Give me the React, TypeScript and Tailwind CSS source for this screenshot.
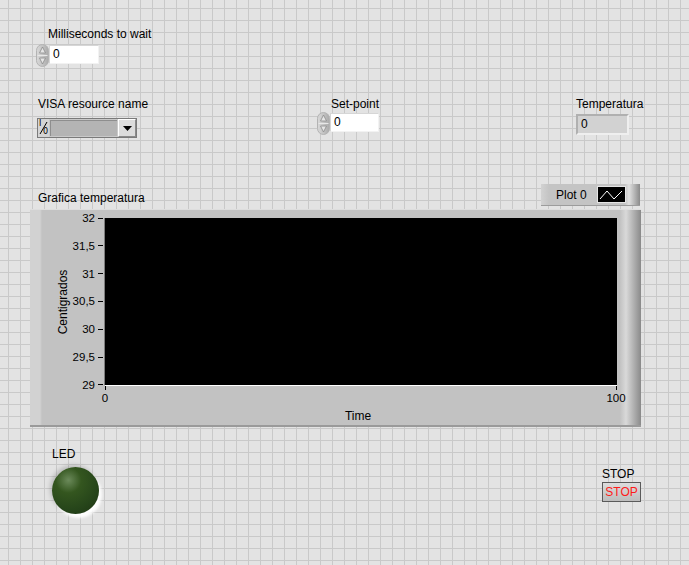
import React from 'react';

const yTicks = ['32', '31,5', '31', '30,5', '30', '29,5', '29'];

function Spinner() {
  return (
    <svg width="13" height="23" viewBox="0 0 13 23" className="block shrink-0">
      <defs>
        <linearGradient id="spin" x1="0" y1="0" x2="1" y2="0">
          <stop offset="0" stopColor="#d9d9d9" />
          <stop offset="0.5" stopColor="#c4c4c4" />
          <stop offset="1" stopColor="#a9a9a9" />
        </linearGradient>
      </defs>
      <rect x="0.5" y="0.5" width="12" height="22" rx="6" fill="url(#spin)" stroke="#b3b3b3" />
      <line x1="1.5" y1="11.5" x2="11.5" y2="11.5" stroke="#e8e8e8" />
      <path d="M6.5 3 L9.5 9 L3.5 9 Z" fill="#e5e5e5" stroke="#8a8a8a" strokeWidth="0.8" />
      <path d="M6.5 20 L9.5 14 L3.5 14 Z" fill="#e5e5e5" stroke="#8a8a8a" strokeWidth="0.8" />
    </svg>
  );
}

function NumericControl({ width }: { width: string }) {
  return (
    <div className="flex items-start">
      <Spinner />
      <div
        className={`mt-[1px] h-[19px] ${width} border-t border-l border-b border-r border-t-[#d6d6d6] border-l-[#d6d6d6] border-b-[#f2f2f2] border-r-[#f2f2f2] bg-white pl-[3px] leading-[17px]`}
      >
        0
      </div>
    </div>
  );
}

export default function App() {
  return (
    <div className="h-[565px] w-[689px] overflow-hidden bg-[#e3e3e3] bg-[linear-gradient(to_right,#c9c9c9_1px,transparent_1px),linear-gradient(to_bottom,#c9c9c9_1px,transparent_1px)] bg-size-[12px_12px] bg-position-[8px_8px] font-['Liberation_Sans',Arial,sans-serif] text-[12px] leading-[14px] text-black">
      {/* Milliseconds to wait */}
      <div className="ml-[36px] pt-[27px]">
        <div className="ml-[12px]">Milliseconds to wait</div>
        <div className="mt-[3px]">
          <NumericControl width="w-[50px]" />
        </div>
      </div>

      {/* VISA / Set-point / Temperatura */}
      <div className="mt-[30px] flex items-start">
        <div className="ml-[37px] w-[280px]">
          <div className="ml-[1px]">VISA resource name</div>
          <div className="mt-[7px] flex h-[20px] w-[100px] border border-[#7a7a7a] bg-[#c9c9c9]">
            <div className="relative w-[11px] shrink-0 bg-[#d4d4d4] font-['DejaVu_Sans',sans-serif] text-[8px] leading-[8px]">
              <svg width="11" height="18" viewBox="0 0 11 18" className="absolute left-0 top-0">
                <line x1="9" y1="3" x2="2" y2="15" stroke="#000" strokeWidth="1" />
              </svg>
              <span className="absolute left-[1px] top-[1px] z-10">I</span>
              <span className="absolute left-[5px] top-[9px] z-10">0</span>
            </div>
            <div className="m-[1px] flex-1 border-t border-l border-t-[#8e8e8e] border-l-[#8e8e8e] bg-[#b4b4b4]" />
            <div className="flex w-[18px] shrink-0 items-center justify-center border-t border-l border-b border-r border-t-white border-l-white border-b-[#8a8a8a] border-r-[#8a8a8a] bg-[#dcdcdc]">
              <svg width="9" height="5" viewBox="0 0 9 5">
                <path d="M0 0 H9 L4.5 5 Z" fill="#000" />
              </svg>
            </div>
          </div>
        </div>

        <div className="w-[259px]">
          <div className="ml-[14px]">Set-point</div>
          <div className="mt-[1px]">
            <NumericControl width="w-[49px]" />
          </div>
        </div>

        <div>
          <div>Temperatura</div>
          <div className="mt-[3px] h-[21px] w-[53px] border-t-2 border-l-2 border-b-2 border-r-2 border-t-[#b0b0b0] border-l-[#b0b0b0] border-b-[#efefef] border-r-[#efefef] bg-[#d2d2d2] pl-[3px] leading-[17px]">
            0
          </div>
        </div>
      </div>

      {/* Graph header: label + legend */}
      <div className="ml-[30px] mt-[46px] flex h-[25px] w-[611px] items-start">
        <div className="ml-[8px] mt-[7px]">Grafica temperatura</div>
        <div className="ml-auto mr-[1px] flex h-[22px] w-[99px] items-center border-b border-b-[#9c9c9c] bg-[linear-gradient(to_right,#d2d2d2_0px,#c4c4c4_8px,#c4c4c4_84px,#e0e0e0_88px,#8a8a8a_99px)] pl-[15px]">
          <span>Plot 0</span>
          <div className="ml-[10px] flex h-[17px] w-[29px] items-center justify-center border border-[#e5e5e5] bg-black">
            <svg width="25" height="13" viewBox="0 0 25 13">
              <polyline points="1,11 8,3 15,11 23,3" fill="none" stroke="#fff" strokeWidth="1" />
            </svg>
          </div>
        </div>
      </div>

      {/* Graph frame */}
      <div className="ml-[30px] flex h-[218px] w-[611px] border-t border-b-2 border-t-[#dedede] border-b-[#9a9a9a] bg-[linear-gradient(to_right,#d2d2d2_0px,#d2d2d2_10px,#c2c2c2_12px,#c2c2c2_590px,#d9d9d9_596px,#8a8a8a_611px)] pt-[8px]">
        {/* Y axis */}
        <div className="flex h-[167px] w-[74px] shrink-0">
          <div className="ml-[27px] flex w-[12px] items-center justify-center">
            <span className="-rotate-90 whitespace-nowrap">Centigrados</span>
          </div>
          <div className="flex w-[34px] flex-col justify-between text-[11.5px]">
            {yTicks.map((t) => (
              <div key={t} className="flex h-0 items-center justify-end gap-[3px]">
                <span>{t}</span>
                <span className="h-px w-[5px] bg-black" />
              </div>
            ))}
          </div>
        </div>

        {/* Plot + X axis */}
        <div className="w-[513px] shrink-0">
          <div className="h-[168px] border-l border-b border-l-[#7d7d7d] border-b-white bg-black" />
          <div className="flex justify-between px-[1px] text-[11.5px]">
            <div className="flex w-0 flex-col items-center">
              <span className="h-[4px] w-px bg-black" />
              <span className="mt-[1px]">0</span>
            </div>
            <div className="flex w-0 flex-col items-center">
              <span className="h-[4px] w-px bg-black" />
              <span className="mt-[1px]">100</span>
            </div>
          </div>
          <div className="mt-[4px] pr-[5px] text-center">Time</div>
        </div>
      </div>

      {/* LED + STOP */}
      <div className="mt-[20px] flex items-start">
        <div className="ml-[52px] w-[550px]">
          <div>LED</div>
          <div className="mt-[6px] h-[47px] w-[47px] rounded-full bg-[radial-gradient(circle_at_35%_28%,#6b8a5a_0%,#34561f_28%,#26451a_65%,#1c3212_100%)] shadow-[3px_4px_3px_rgba(255,255,255,0.95),-2px_-2px_4px_rgba(0,0,0,0.18)]" />
        </div>
        <div className="mt-[20px]">
          <div>STOP</div>
          <div className="mt-[1px] flex h-[20px] w-[39px] items-center justify-center border border-[#5a5a5a] bg-[linear-gradient(to_bottom,#dcdcdc,#bdbdbd)] text-[#ff1a1a]">
            STOP
          </div>
        </div>
      </div>
    </div>
  );
}
